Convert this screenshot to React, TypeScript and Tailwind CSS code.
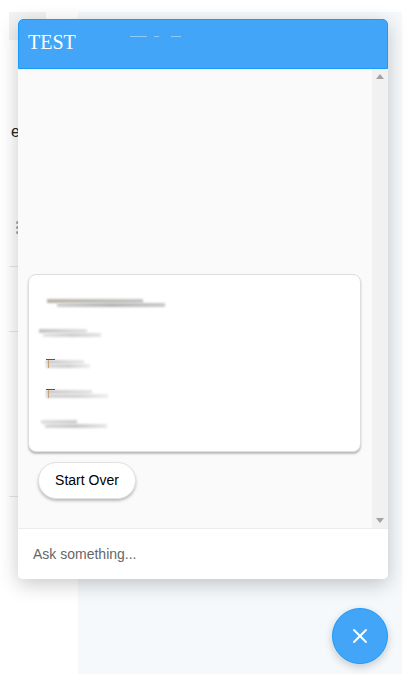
import { X } from 'lucide-react';

const redactedRows = [
  { pad: 'ml-[18px]', top: 'w-[96px] from-[#b8b4a6] to-[#c4c4c4]', bottom: 'ml-[10px] w-[108px] from-[#cfcfcf] via-[#b4b4b4] to-[#cacaca]', tee: false },
  { pad: 'ml-[10px]', top: 'w-[48px] from-[#c2c2c2] to-[#e2e2e2]', bottom: 'ml-[4px] w-[58px] from-[#e4e4e4] via-[#cfcfcf] to-[#e4e4e4]', tee: false },
  { pad: 'ml-[17px]', top: 'w-[38px] from-[#c8c8c8] to-[#e8e8e8]', bottom: 'w-[44px] from-[#d8d8d8] via-[#d0d0d0] to-[#efefef]', tee: true },
  { pad: 'ml-[17px]', top: 'w-[46px] from-[#c8c8c8] to-[#e4e4e4]', bottom: 'w-[62px] from-[#d4d4d4] via-[#d4d4d4] to-[#efefef]', tee: true },
  { pad: 'ml-[12px]', top: 'w-[36px] from-[#e0e0e0] to-[#cdcdcd]', bottom: 'ml-[4px] w-[62px] from-[#d8d8d8] via-[#c8c8c8] to-[#e8e8e8]', tee: false },
];

function PageBehind() {
  return (
    <div className="flex h-[678px] w-[409px] bg-white pl-[9px] pr-[7px] pb-[4px] pt-[12px]">
      <div className="flex w-[69px] flex-col bg-white">
        <div className="h-[28px] w-[37px] bg-[#f2f3f5]" />
        <div className="mt-[82px] h-[20px] pl-[2px] text-[16px] leading-[20px] text-[#222]" style={{ fontFamily: '"Liberation Sans", sans-serif' }}>e</div>
        <div className="mt-[79px] ml-[7px] flex w-[4px] flex-col gap-[2px]">
          <span className="h-[3px] w-[3px] rounded-full bg-[#a8a8a8]" />
          <span className="h-[3px] w-[3px] rounded-full bg-[#a8a8a8]" />
          <span className="h-[3px] w-[3px] rounded-full bg-[#a8a8a8]" />
        </div>
        <div className="mt-[32px] h-px w-full bg-[#e6e6e6]" />
        <div className="mt-[64px] h-px w-full bg-[#e6e6e6]" />
        <div className="mt-[164px] h-px w-full bg-[#e6e6e6]" />
      </div>
      <div className="flex-1 bg-[#f5f9fc]" />
    </div>
  );
}

function ChatWindow() {
  return (
    <div className="absolute left-[18px] top-[19px] flex h-[560px] w-[370px] flex-col overflow-hidden rounded-[5px] bg-white shadow-[0_5px_20px_rgba(0,0,0,0.22)]">
      <div className="flex h-[50px] shrink-0 items-start rounded-t-[5px] border border-[#1a9bfb] bg-[#42a5f8] pl-[9px] pt-[10px] shadow-[0_2px_4px_rgba(0,0,0,0.15)]">
        <span className="text-[20px] leading-[24px] text-white" style={{ fontFamily: '"Liberation Serif", serif' }}>TEST</span>
        <div className="ml-[54px] mt-[6px] flex gap-[7px]">
          <span className="h-px w-[17px] bg-[#8fcbfa]" />
          <span className="h-px w-[5px] bg-[#8fcbfa]" />
          <span className="ml-[5px] h-px w-[10px] bg-[#8fcbfa]" />
        </div>
      </div>

      <div className="flex min-h-0 flex-1 bg-[#fafafa]">
        <div className="flex flex-1 flex-col justify-end pb-[29px] pl-[10px] pr-[11px]">
          <div className="flex h-[178px] flex-col justify-between rounded-[8px] border border-[#dedede] bg-white pb-[23px] pt-[24px] shadow-[0_2px_2px_rgba(0,0,0,0.25)]">
            {redactedRows.map((row, i) => (
              <div key={i} className={`relative flex flex-col ${row.pad}`}>
                <div className={`h-[4px] bg-gradient-to-r blur-[1px] ${row.top}`} />
                <div className={`h-[4px] bg-gradient-to-r blur-[1px] ${row.bottom}`} />
                {row.tee && <span className="absolute left-0 top-[-1px] h-px w-[9px] bg-[#555]" />}
                {row.tee && <span className="absolute left-[2px] top-0 h-[8px] w-px bg-[#c9a27a]" />}
              </div>
            ))}
          </div>
          <button
            className="ml-[10px] mt-[10px] h-[37px] w-[98px] rounded-full border border-[#e2e2e2] bg-white text-[14px] text-black shadow-[0_2px_3px_rgba(0,0,0,0.25)]"
            style={{ fontFamily: '"Liberation Sans", sans-serif' }}
          >
            Start Over
          </button>
        </div>
        <div className="flex w-[16px] shrink-0 flex-col items-center justify-between bg-[#f1f1f1] py-[5px]">
          <span className="h-0 w-0 border-x-[4px] border-b-[5px] border-x-transparent border-b-[#a3a3a3]" />
          <span className="h-0 w-0 border-x-[4px] border-t-[5px] border-x-transparent border-t-[#a3a3a3]" />
        </div>
      </div>

      <div
        className="flex h-[51px] shrink-0 items-center border-t border-[#ececec] bg-white pl-[15px] text-[14px] text-[#666]"
        style={{ fontFamily: '"Liberation Sans", sans-serif' }}
      >
        Ask something...
      </div>
    </div>
  );
}

export default function App() {
  return (
    <div className="relative h-[678px] w-[409px] overflow-hidden">
      <PageBehind />
      <ChatWindow />
      <button className="absolute left-[332px] top-[608px] flex h-[56px] w-[56px] items-center justify-center rounded-full border border-[#1a9bfb] bg-[#42a5f8] shadow-[0_3px_8px_rgba(0,0,0,0.2)]">
        <X className="h-[24px] w-[24px] text-white" strokeWidth={2} />
      </button>
    </div>
  );
}
